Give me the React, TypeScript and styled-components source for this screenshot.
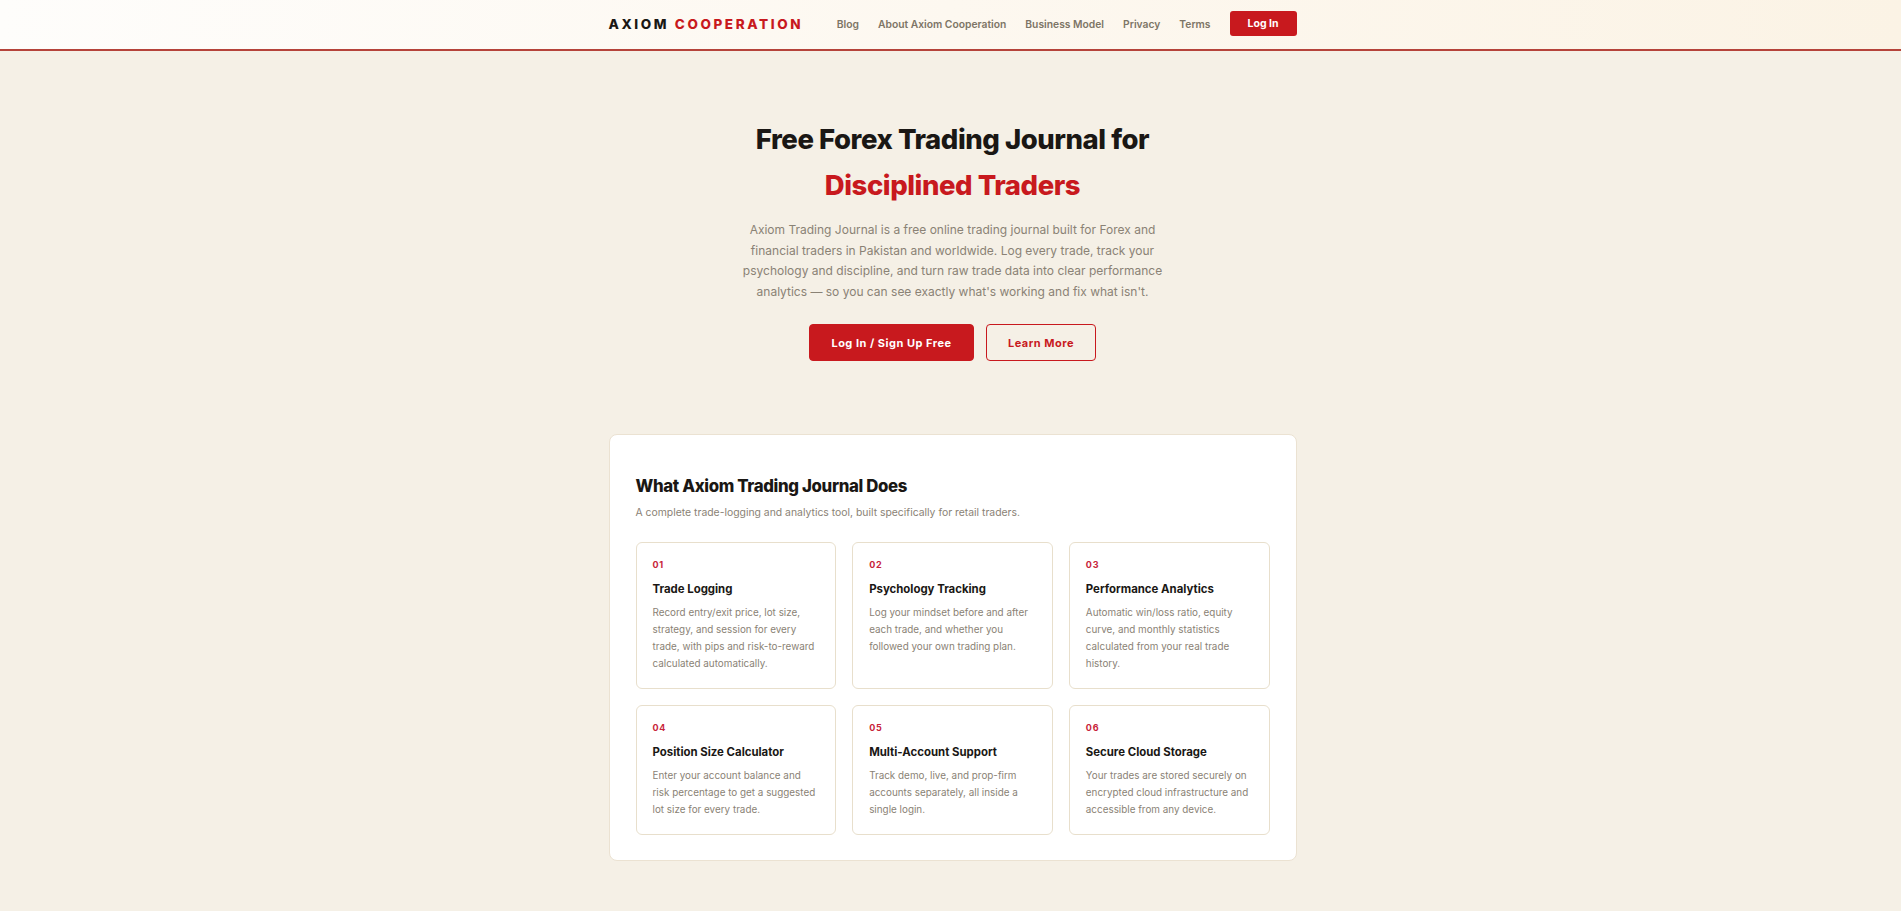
import React from "react";
import styled, { createGlobalStyle } from "styled-components";

const GlobalStyle = createGlobalStyle`
  * {
    box-sizing: border-box;
  }

  body {
    margin: 0;
    background: #f5f0e6;
    font-family: Inter, "Noto Sans", "Liberation Sans", sans-serif;
    color: #1a1714;
  }
`;

const RED = "#c8191e";

const Page = styled.div`
  min-height: 100vh;
  background: #f5f0e6;
  padding-left: 4px;
`;

const Header = styled.header`
  height: 51px;
  background: linear-gradient(90deg, #fefdfb 0%, #fdf8f0 50%, #fbf3e5 100%);
  border-bottom: 2px solid #b5433a;
  margin-left: -4px;
  padding-left: 4px;
`;

const Container = styled.div`
  width: 688px;
  margin: 0 auto;
`;

const HeaderInner = styled(Container)`
  height: 100%;
  display: flex;
  align-items: center;
  justify-content: space-between;
  padding-bottom: 2px;
`;

const Logo = styled.div`
  font-size: 13.5px;
  font-weight: 800;
  letter-spacing: 2.6px;
  color: #1a1714;
  white-space: nowrap;
`;

const LogoAccent = styled.span`
  color: ${RED};
`;

const Nav = styled.nav`
  display: flex;
  align-items: center;
  gap: 19px;
`;

const NavLink = styled.a`
  font-size: 10.3px;
  font-weight: 600;
  color: #7d7566;
  text-decoration: none;
  white-space: nowrap;
  cursor: pointer;
`;

const HeaderButton = styled.button`
  height: 25px;
  padding: 0 18px;
  border: none;
  border-radius: 3px;
  background: ${RED};
  color: #fff;
  font-family: inherit;
  font-size: 10.5px;
  font-weight: 700;
  cursor: pointer;
`;

const Hero = styled.section`
  display: flex;
  flex-direction: column;
  align-items: center;
  text-align: center;
  padding-top: 65px;
`;

const Title = styled.h1`
  margin: 0;
  font-size: 27.5px;
  line-height: 46px;
  font-weight: 800;
  letter-spacing: -0.45px;
  color: #1a1714;
`;

const TitleAccent = styled.span`
  color: ${RED};
`;

const Lead = styled.p`
  margin: 12px 0 0;
  max-width: 430px;
  font-size: 12px;
  line-height: 20.6px;
  color: #8a8275;
`;

const Actions = styled.div`
  display: flex;
  gap: 12px;
  margin-top: 22px;
`;

const Button = styled.button<{ $outline?: boolean }>`
  height: 37px;
  padding: 0 17px;
  border-radius: 4px;
  border: 1px solid ${RED};
  background: ${(p) => (p.$outline ? "transparent" : RED)};
  color: ${(p) => (p.$outline ? RED : "#fff")};
  font-family: inherit;
  font-size: 11px;
  font-weight: 700;
  letter-spacing: 0.5px;
  cursor: pointer;
  min-width: ${(p) => (p.$outline ? 110 : 165)}px;
`;

const Panel = styled(Container)`
  margin-top: 73px;
  background: #fff;
  border: 1px solid #ebe2d2;
  border-radius: 8px;
  padding: 40px 26px 25px;
`;

const PanelTitle = styled.h2`
  margin: 0;
  font-size: 16.8px;
  line-height: 22px;
  font-weight: 800;
  letter-spacing: -0.35px;
  color: #1a1714;
`;

const PanelSub = styled.p`
  margin: 8px 0 0;
  font-size: 10.4px;
  line-height: 16px;
  color: #8a8275;
`;

const Grid = styled.div`
  display: grid;
  grid-template-columns: repeat(3, 1fr);
  gap: 16px;
  margin-top: 21px;
`;

const Card = styled.div`
  border: 1px solid #e8dfcc;
  border-radius: 6px;
  padding: 15px 16px 16px 16px;
`;

const CardNum = styled.div`
  font-size: 9px;
  line-height: 14px;
  font-weight: 700;
  letter-spacing: 0.8px;
  color: #c8243a;
`;

const CardTitle = styled.h3`
  margin: 9px 0 0;
  font-size: 11.4px;
  line-height: 16px;
  font-weight: 700;
  color: #1a1714;
`;

const CardText = styled.p`
  margin: 7px 0 0;
  font-size: 9.9px;
  line-height: 17px;
  color: #8a8275;
`;

const FEATURES = [
  {
    num: "01",
    title: "Trade Logging",
    text: "Record entry/exit price, lot size, strategy, and session for every trade, with pips and risk-to-reward calculated automatically.",
  },
  {
    num: "02",
    title: "Psychology Tracking",
    text: "Log your mindset before and after each trade, and whether you followed your own trading plan.",
  },
  {
    num: "03",
    title: "Performance Analytics",
    text: "Automatic win/loss ratio, equity curve, and monthly statistics calculated from your real trade history.",
  },
  {
    num: "04",
    title: "Position Size Calculator",
    text: "Enter your account balance and risk percentage to get a suggested lot size for every trade.",
  },
  {
    num: "05",
    title: "Multi-Account Support",
    text: "Track demo, live, and prop-firm accounts separately, all inside a single login.",
  },
  {
    num: "06",
    title: "Secure Cloud Storage",
    text: "Your trades are stored securely on encrypted cloud infrastructure and accessible from any device.",
  },
];

const NAV_LINKS = ["Blog", "About Axiom Cooperation", "Business Model", "Privacy", "Terms"];

export default function App() {
  return (
    <Page>
      <GlobalStyle />
      <Header>
        <HeaderInner>
          <Logo>
            AXIOM <LogoAccent>COOPERATION</LogoAccent>
          </Logo>
          <Nav>
            {NAV_LINKS.map((l) => (
              <NavLink key={l}>{l}</NavLink>
            ))}
            <HeaderButton>Log In</HeaderButton>
          </Nav>
        </HeaderInner>
      </Header>

      <Hero>
        <Title>
          Free Forex Trading Journal for
          <br />
          <TitleAccent>Disciplined Traders</TitleAccent>
        </Title>
        <Lead>
          Axiom Trading Journal is a free online trading journal built for Forex and
          financial traders in Pakistan and worldwide. Log every trade, track your
          psychology and discipline, and turn raw trade data into clear performance
          analytics — so you can see exactly what's working and fix what isn't.
        </Lead>
        <Actions>
          <Button>Log In / Sign Up Free</Button>
          <Button $outline>Learn More</Button>
        </Actions>
      </Hero>

      <Panel>
        <PanelTitle>What Axiom Trading Journal Does</PanelTitle>
        <PanelSub>
          A complete trade-logging and analytics tool, built specifically for retail traders.
        </PanelSub>
        <Grid>
          {FEATURES.map((f) => (
            <Card key={f.num}>
              <CardNum>{f.num}</CardNum>
              <CardTitle>{f.title}</CardTitle>
              <CardText>{f.text}</CardText>
            </Card>
          ))}
        </Grid>
      </Panel>
    </Page>
  );
}
